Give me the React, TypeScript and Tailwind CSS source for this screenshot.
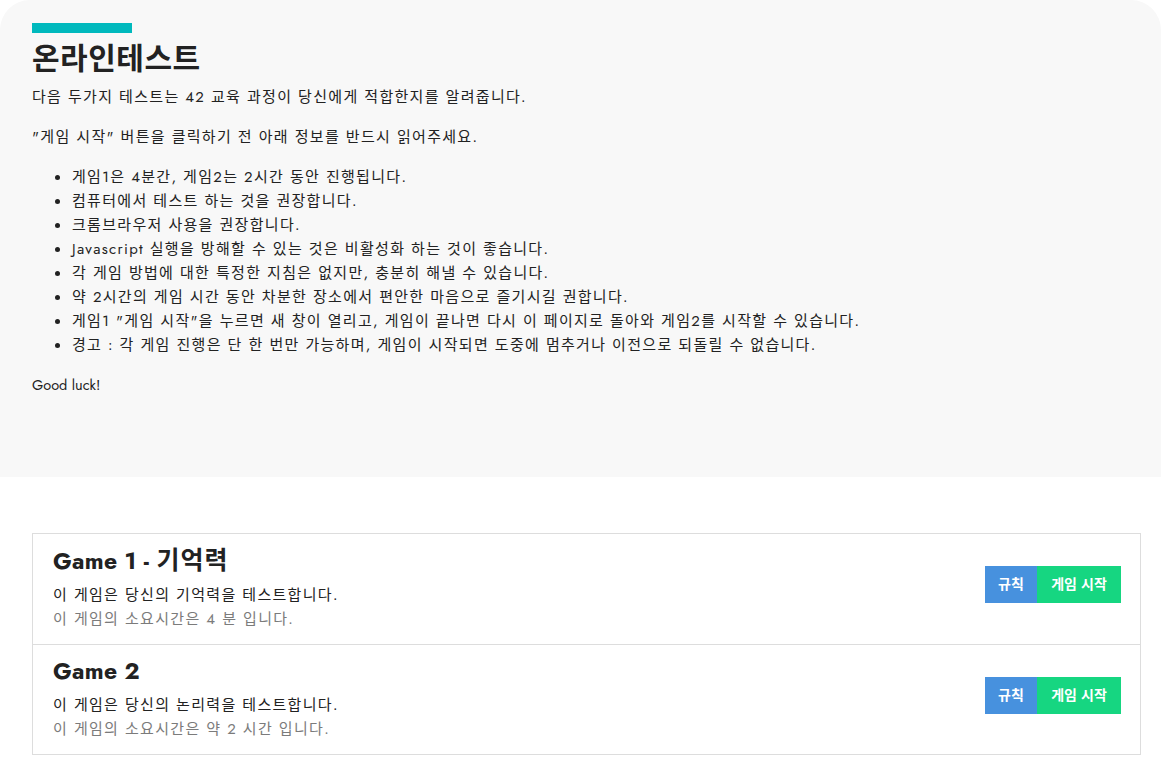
const font = "font-['Futura','Jost','Noto_Sans_CJK_KR',sans-serif]";

const rules = [
  "게임1은 4분간, 게임2는 2시간 동안 진행됩니다.",
  "컴퓨터에서 테스트 하는 것을 권장합니다.",
  "크롬브라우저 사용을 권장합니다.",
  "Javascript 실행을 방해할 수 있는 것은 비활성화 하는 것이 좋습니다.",
  "각 게임 방법에 대한 특정한 지침은 없지만, 충분히 해낼 수 있습니다.",
  "약 2시간의 게임 시간 동안 차분한 장소에서 편안한 마음으로 즐기시길 권합니다.",
  "게임1 \"게임 시작\"을 누르면 새 창이 열리고, 게임이 끝나면 다시 이 페이지로 돌아와 게임2를 시작할 수 있습니다.",
  "경고 : 각 게임 진행은 단 한 번만 가능하며, 게임이 시작되면 도중에 멈추거나 이전으로 되돌릴 수 없습니다.",
];

const games = [
  { title: "Game 1 - ", sub: "기억력", desc: "이 게임은 당신의 기억력을 테스트합니다.", time: "이 게임의 소요시간은 4 분 입니다." },
  { title: "Game 2", sub: "", desc: "이 게임은 당신의 논리력을 테스트합니다.", time: "이 게임의 소요시간은 약 2 시간 입니다." },
];

export default function App() {
  return (
    <div className={`min-h-screen bg-white text-[#222] ${font}`}>
      <section className="bg-[#f8f8f8] rounded-t-[30px] h-[477px] px-8 pt-[23px]">
        <div className="w-[100px] h-[10px] bg-[#00b9bd]" />
        <h1 className="mt-[6px] text-[30px] leading-[40px] font-bold tracking-[0.5px] text-[#222]">온라인테스트</h1>
        <div className="tracking-[1.3px] text-[15px] leading-[24px]">
          <p className="mt-[6px]">다음 두가지 테스트는 42 교육 과정이 당신에게 적합한지를 알려줍니다.</p>
          <p className="mt-[16px]">"게임 시작" 버튼을 클릭하기 전 아래 정보를 반드시 읽어주세요.</p>
          <ul className="mt-[16px] list-disc pl-10">
            {rules.map((r) => (
              <li key={r}>{r}</li>
            ))}
          </ul>
          <p className="mt-[16px] text-[14.5px] tracking-normal">Good luck!</p>
        </div>
      </section>

      <section className="pl-8 pr-[20px] pt-[56px] pb-5">
        <div className="border border-[#dddddd]">
          {games.map((g, i) => (
            <div
              key={g.title}
              className={`h-[110px] flex items-start justify-between pl-5 pr-[19px] ${i > 0 ? "border-t border-[#dddddd]" : ""}`}
            >
              <div className="pt-[11px]">
                <h2 className="text-[23px] leading-[30px] font-bold tracking-[0.3px] text-[#222]">
                  {g.title}
                  {g.sub && <span className="text-[25px] tracking-[1px]">{g.sub}</span>}
                </h2>
                <p className="mt-[7px] text-[15px] leading-[24px] tracking-[1.3px] text-[#222]">{g.desc}</p>
                <p className="text-[15px] leading-[24px] tracking-[1.3px] text-[#7b7b7b]">{g.time}</p>
              </div>
              <div className="flex mt-[32px]">
                <button className="h-[37px] w-[52px] bg-[#4791de] text-white text-[14px] font-bold">규칙</button>
                <button className="h-[37px] w-[84px] bg-[#16d681] text-white text-[14px] font-bold">게임 시작</button>
              </div>
            </div>
          ))}
        </div>
      </section>
    </div>
  );
}
